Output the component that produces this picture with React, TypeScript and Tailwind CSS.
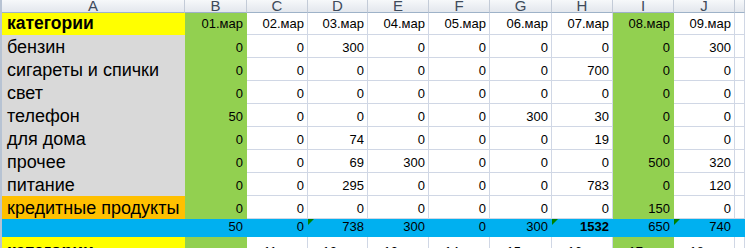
import React from "react";

type Fill = "white" | "green" | "grey" | "yellow" | "orange" | "blue";

const fills: Record<Fill, string> = {
  white: "bg-white border-[#d0d7e5]",
  green: "bg-[#92d050] border-[#92d050]",
  grey: "bg-[#d9d9d9] border-[#d9d9d9]",
  yellow: "bg-[#ffff00] border-[#ffff00]",
  orange: "bg-[#ffc000] border-[#ffc000]",
  blue: "bg-[#00b0f0] border-[#00b0f0]",
};

const letters = ["A", "B", "C", "D", "E", "F", "G", "H", "I", "J", ""];
const dates = ["01.мар", "02.мар", "03.мар", "04.мар", "05.мар", "06.мар", "07.мар", "08.мар", "09.мар"];
const nextDates = ["", "11.мар", "12.мар", "13.мар", "14.мар", "15.мар", "16.мар", "17.мар", "18.мар"];

const rows: { name: string; fill: Fill; values: number[] }[] = [
  { name: "бензин", fill: "grey", values: [0, 0, 300, 0, 0, 0, 0, 0, 300] },
  { name: "сигареты и спички", fill: "grey", values: [0, 0, 0, 0, 0, 0, 700, 0, 0] },
  { name: "свет", fill: "grey", values: [0, 0, 0, 0, 0, 0, 0, 0, 0] },
  { name: "телефон", fill: "grey", values: [50, 0, 0, 0, 0, 300, 30, 0, 0] },
  { name: "для дома", fill: "grey", values: [0, 0, 74, 0, 0, 0, 19, 0, 0] },
  { name: "прочее", fill: "grey", values: [0, 0, 69, 300, 0, 0, 0, 500, 320] },
  { name: "питание", fill: "grey", values: [0, 0, 295, 0, 0, 0, 783, 0, 120] },
  { name: "кредитные продукты", fill: "orange", values: [0, 0, 0, 0, 0, 0, 0, 150, 0] },
];

const totals = [50, 0, 738, 300, 0, 300, 1532, 650, 740];
const flagged = [2, 6, 8];

const colFill = (i: number): Fill => (i === 0 || i === 7 ? "green" : "white");

const Cell: React.FC<{ fill: Fill; right?: boolean; className?: string; children?: React.ReactNode }> = ({
  fill,
  right,
  className,
  children,
}) => (
  <div
    className={`relative flex items-end overflow-visible whitespace-nowrap border-r border-b ${fills[fill]} ${
      right ? "justify-end pr-[3px]" : "pl-[5px]"
    } ${className ?? ""}`}
  >
    {children}
  </div>
);

const Flag = () => (
  <span className="absolute top-0 left-0 w-0 h-0 border-t-[6px] border-t-[#008000] border-r-[6px] border-r-transparent" />
);

const App: React.FC = () => {
  return (
    <div className="w-[745px] h-[248px] overflow-hidden bg-white border-l-[2px] border-[#b7c3d3] font-['Liberation_Sans',Arial,sans-serif] text-black">
      <div className="grid grid-cols-[183px_62px_61px_60px_61px_61px_62px_61px_61px_61px_1fr] grid-rows-[13px_22px_repeat(8,23px)_18px_26px]">
        {letters.map((l, i) => (
          <div
            key={"h" + i}
            className="flex items-end justify-center overflow-hidden border-r border-b border-r-[#c3cbd7] border-b-[#9eb2c8] bg-gradient-to-b from-[#f6f8fa] to-[#e3e7ed] text-[15px] leading-none text-[#3e4a5a]"
          >
            <span className="-mb-[1px]">{l}</span>
          </div>
        ))}

        <Cell fill="yellow" className="text-[17.5px] font-bold leading-none pb-[2px]">
          категории
        </Cell>
        {dates.map((d, i) => (
          <Cell key={"d" + i} fill={colFill(i)} right className="text-[13px] leading-none pb-[4px]">
            {d}
          </Cell>
        ))}
        <Cell fill="white" />

        {rows.map((r) => (
          <React.Fragment key={r.name}>
            <Cell fill={r.fill} className="text-[18px] leading-none pb-[1px]">
              {r.name}
            </Cell>
            {r.values.map((v, i) => (
              <Cell key={i} fill={colFill(i)} right className="text-[13px] leading-none pb-[3px]">
                {v}
              </Cell>
            ))}
            <Cell fill="white" />
          </React.Fragment>
        ))}

        <Cell fill="blue" />
        {totals.map((v, i) => (
          <Cell
            key={"t" + i}
            fill="blue"
            right
            className={`text-[13px] leading-none pb-[3px] ${v === 1532 ? "font-bold" : ""}`}
          >
            {flagged.includes(i) && <Flag />}
            {v}
          </Cell>
        ))}
        <Cell fill="blue" />

        <Cell fill="yellow" className="text-[17.5px] font-bold leading-none pb-[2px]">
          категории
        </Cell>
        {nextDates.map((d, i) => (
          <Cell key={"n" + i} fill={colFill(i)} right className="text-[13px] leading-none pb-[4px]">
            {d}
          </Cell>
        ))}
        <Cell fill="white" />
      </div>
    </div>
  );
};

export default App;
